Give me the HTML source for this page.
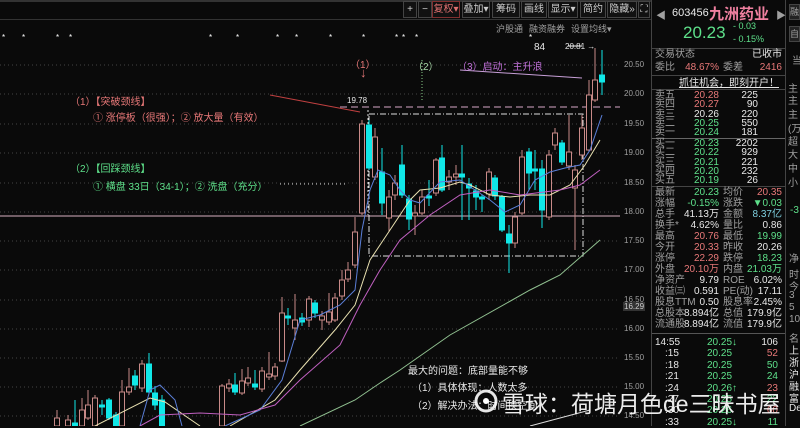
<!DOCTYPE html>
<html><head><meta charset="utf-8"><style>
*{margin:0;padding:0;box-sizing:border-box}
body{width:800px;height:426px;background:#0a0a0a;overflow:hidden;position:relative;font-family:"Liberation Sans","Noto Sans CJK SC",sans-serif;font-size:10px;color:#ddd}
.a{position:absolute;white-space:nowrap}
.btn{position:absolute;top:1px;height:17px;border:1px solid #444;background:#111;color:#ccc;font-size:10px;line-height:15px;text-align:center}
.r{color:#e87878}.g{color:#5ee08a}.w{color:#e8e8e8}.gy{color:#a0a0a0}.c{color:#7fd0e0}
.row{position:absolute;left:655px;width:130px;font-size:10px;line-height:10px;white-space:nowrap}
.row span{position:absolute}
</style></head><body>
<svg id="ch" class="a" style="left:0;top:0" width="651" height="426"></svg>

<div class="a" style="left:0;top:0;width:651px;height:2px;background:#333"></div>
<div class="a" style="left:0;top:19px;width:651px;height:1px;background:#333"></div>
<div class="btn" style="left:403px;width:14px">+</div>
<div class="btn" style="left:418px;width:14px">−</div>
<div class="btn" style="left:432px;width:28px;color:#e07070;border-color:#803030">复权▾</div>
<div class="btn" style="left:462px;width:28px">叠加▾</div>
<div class="btn" style="left:492px;width:28px">筹码</div>
<div class="btn" style="left:521px;width:26px">画线</div>
<div class="btn" style="left:548px;width:30px">显示▾</div>
<div class="btn" style="left:580px;width:26px">简约</div>
<div class="btn" style="left:607px;width:30px">隐藏»</div>
<div class="btn" style="left:638px;width:12px">⛶</div>
<div class="a gy" style="left:496px;top:22px;font-size:9px">沪股通</div>
<div class="a gy" style="left:529px;top:22px;font-size:9px">融资融券</div>
<div class="a gy" style="left:571px;top:22px;font-size:9px">设置均线▾</div>

<div class="a r" style="left:350px;top:56px;font-size:10px">（1）</div>
<div class="a r" style="left:360px;top:65px;font-size:13px">↓</div>
<div class="a" style="left:413px;top:58px;color:#a8d8a8">（2）</div>
<div class="a" style="left:457px;top:58px;color:#c070d8">（3）启动：主升浪</div>
<div class="a w" style="left:534px;top:42px;font-size:10px">84</div>
<div class="a w" style="left:565px;top:42px;font-size:8px">20.81 →</div>
<div class="a w" style="left:347px;top:96px;font-size:8px">19.78</div>
<div class="a r" style="left:70px;top:93px">（1）【突破颈线】</div>
<div class="a r" style="left:93px;top:109px">① 涨停板（很强）；② 放大量（有效）</div>
<div class="a g" style="left:70px;top:160px">（2）【回踩颈线】</div>
<div class="a g" style="left:93px;top:178px">① 横盘 33日（34-1）；② 洗盘（充分）</div>
<div class="a w" style="left:408px;top:362px">最大的问题：底部量能不够</div>
<div class="a w" style="left:412px;top:379px">（1）具体体现：人数太多</div>
<div class="a w" style="left:412px;top:397px">（2）解决办法：时间换空间</div>

<div class="a gy" style="left:624px;top:60px;font-size:8px">20.50</div>
<div class="a gy" style="left:624px;top:89px;font-size:8px">20.00</div>
<div class="a gy" style="left:624px;top:119px;font-size:8px">19.50</div>
<div class="a gy" style="left:624px;top:148px;font-size:8px">19.00</div>
<div class="a gy" style="left:624px;top:178px;font-size:8px">18.50</div>
<div class="a gy" style="left:624px;top:207px;font-size:8px">18.00</div>
<div class="a gy" style="left:624px;top:236px;font-size:8px">17.50</div>
<div class="a gy" style="left:624px;top:265px;font-size:8px">17.00</div>
<div class="a gy" style="left:624px;top:295px;font-size:8px">16.50</div>
<div class="a" style="left:623px;top:302px;font-size:8px;background:#333;color:#ccc;padding:0 1px">16.29</div>
<div class="a gy" style="left:624px;top:324px;font-size:8px">16.00</div>
<div class="a gy" style="left:624px;top:353px;font-size:8px">15.50</div>
<div class="a gy" style="left:624px;top:382px;font-size:8px">15.00</div>
<div class="a gy" style="left:624px;top:411px;font-size:8px">14.50</div>

<div class="a" style="left:651px;top:0;width:1px;height:426px;background:#444"></div>
<div class="a" style="left:785px;top:0;width:1px;height:426px;background:#444"></div>
<div class="a gy" style="left:656px;top:7px">◀</div>
<div class="a w" style="left:672px;top:7px;font-size:11px">603456</div>
<div class="a" style="left:709px;top:3px;font-size:15px;color:#f080a0;font-weight:bold">九洲药业</div>
<div class="a gy" style="left:776px;top:7px">▶</div>
<div class="a g" style="left:683px;top:23px;font-size:17px">20.23</div>
<div class="a g" style="left:733px;top:21px;font-size:9px">- 0.03</div>
<div class="a g" style="left:733px;top:34px;font-size:9px">- 0.15%</div>
<div class="a" style="left:652px;top:48px;width:133px;height:1px;background:#444"></div>
<div class="row" style="top:50px"><span class="gy" style="left:0">交易状态</span><span class="w" style="right:3px">已收市</span></div>
<div class="row" style="top:63px"><span class="gy" style="left:0">委比</span><span class="r" style="right:66px">48.67%</span><span class="gy" style="left:68px">委差</span><span class="r" style="right:3px">2416</span></div>
<div class="a" style="left:652px;top:75px;width:133px;height:1px;background:#444"></div>
<div class="row" style="top:79px"><span class="w" style="left:24px;text-decoration:underline">抓住机会，即刻开户！</span></div>
<div class="a" style="left:652px;top:89px;width:133px;height:1px;background:#444"></div>
<div id="ob"></div>

<div class="a gy" style="left:789px;top:4px;width:11px;height:16px;background:#222;border:1px solid #444;font-size:9px">融</div>
<div class="a gy" style="left:789px;top:26px;width:11px;height:16px;background:#222;border:1px solid #444;font-size:9px">自</div>
<div class="a gy" style="left:792px;top:52px">当</div>
<div class="a gy" style="left:788px;top:80px">主</div>
<div class="a gy" style="left:788px;top:92px">主</div>
<div class="a gy" style="left:788px;top:106px">主</div>
<div class="a gy" style="left:788px;top:120px">(万</div>
<div class="a gy" style="left:788px;top:133px">超</div>
<div class="a gy" style="left:788px;top:146px">大</div>
<div class="a gy" style="left:788px;top:160px">中</div>
<div class="a gy" style="left:788px;top:174px">小</div>
<div class="a g" style="left:790px;top:205px">-3</div>
<div class="a gy" style="left:789px;top:250px">净</div>
<div class="a gy" style="left:789px;top:266px">时</div>
<div class="a gy" style="left:789px;top:278px">今</div>
<div class="a gy" style="left:789px;top:290px">3</div>
<div class="a gy" style="left:789px;top:302px">5</div>
<div class="a gy" style="left:789px;top:314px">10</div>
<div class="a gy" style="left:789px;top:330px">名</div>
<div class="a w" style="left:789px;top:342px">上</div>
<div class="a w" style="left:789px;top:354px">浙</div>
<div class="a w" style="left:789px;top:366px">沪</div>
<div class="a w" style="left:789px;top:378px">融</div>
<div class="a w" style="left:789px;top:390px">富</div>
<div class="a w" style="left:789px;top:403px">De</div>

<svg class="a" style="left:473px;top:388px" width="26" height="26"><circle cx="13" cy="13" r="10" fill="none" stroke="#fff" stroke-width="3" opacity=".9"/><circle cx="13" cy="13" r="3" fill="#fff"/></svg>
<div class="a" style="left:502px;top:385px;font-size:23px;color:#fff;opacity:.92">雪球：荷塘月色de三昧书屋</div>

<script>
var s=document.getElementById('ch'),h='';
function L(x1,y1,x2,y2,c,e){h+='<line x1="'+x1+'" y1="'+y1+'" x2="'+x2+'" y2="'+y2+'" stroke="'+c+'" '+(e||'')+'/>';}
for(var y of [65,94,124,153,183,212,241,270,300,329,358,387,416])L(0,y,620,y,'#444','stroke-dasharray="1 3"');
L(0,216,620,216,'#d8b0c0');
L(340,107,620,107,'#d8a8c8','stroke-dasharray="7 4"');
h+='<rect x="369" y="114" width="214" height="142" fill="none" stroke="#ddd" stroke-dasharray="6 2 1 2"/>';
L(368,110,368,215,'#ddd','stroke-dasharray="2 2"');
L(422,60,422,100,'#8c8','stroke-dasharray="1 2"');
L(280,184,345,184,'#ccc','stroke-dasharray="1 3"');
L(270,95,360,112,'#c04040');
L(460,70,582,78,'#c8a0d8');L(568,46,582,46,'#fff');
for(var x of [2,22,56,69,209,236,276,295,329,362,395,402,415,529])h+='<text x="'+x+'" y="40" fill="#fff" font-size="8">*</text>';
var C=[
[57,426,418,410,426],[68,426,420,415,426],[75,423,426,400,426],[82,426,410,398,426],[88,418,405,390,420],[95,426,398,395,426],
[102,405,407,400,415],[109,400,418,398,420],[116,415,426,412,426],[122,426,392,380,426],[129,392,387,368,395],[135,376,385,370,390],
[142,388,364,360,392],[149,364,392,353,394],[155,393,405,386,410],[162,400,426,395,426],
[222,426,386,384,426],[229,388,384,379,392],[235,385,392,373,395],[242,393,381,369,395],[248,383,378,367,386],[255,384,387,370,390],
[262,389,371,367,392],[269,377,374,352,380],[275,376,367,363,380],[282,361,313,297,362],[288,316,318,308,325],[295,328,320,294,340],
[302,318,322,313,326],[309,320,299,296,327],[315,303,313,300,318],[322,320,316,311,330],[329,322,312,293,325],[335,320,298,293,322],
[342,296,280,270,300],[348,279,270,262,282],[355,265,232,217,268],[362,213,124,120,215],[369,125,168,120,170],[375,177,137,128,180],
[382,172,203,148,215],[389,218,197,190,232],[395,195,183,175,200],[402,165,195,145,198],[409,199,219,195,230],[415,216,213,205,235],
[422,213,197,190,215],[429,196,198,180,206],[436,193,160,158,196],[442,158,190,145,192],[449,182,177,170,190],[456,177,174,165,185],
[462,174,177,145,220],[469,184,188,178,220],[476,191,197,185,210],[482,197,199,195,212],[489,194,172,168,200],[495,178,196,175,200],
[502,197,230,195,232],[509,234,243,225,273],[515,243,217,212,248],[522,213,157,150,215],[529,152,173,148,190],[535,169,171,150,190],
[542,169,210,160,228],[549,217,155,150,220],[555,145,133,128,150],[562,143,162,140,165],[569,166,152,115,170],[575,188,170,165,250],
[582,155,128,115,160],[589,150,95,80,152],[595,100,80,48,102],[602,75,82,50,95]];
for(var k of C){var x=k[0],o=k[1],c=k[2],cy=c>o;var col=cy?'#10e8e8':'#c88a88';L(x,k[3],x,k[4],col);var t=Math.min(o,c),b=Math.max(o,c);
h+='<rect x="'+(x-2.5)+'" y="'+t+'" width="5" height="'+Math.max(b-t,1)+'" fill="'+(cy?'#10e8e8':'#0a0a0a')+'" stroke="'+col+'"/>';}
function P(p,c){h+='<polyline points="'+p+'" fill="none" stroke="'+c+'" stroke-width="1"/>';}
P('95,426 150,398 165,402 200,426','#e8e0b0');
P('230,426 275,400 300,370 335,330 355,305 370,260 390,230 410,200 420,190 440,188 460,182 470,185 490,195 510,197 530,195 550,195 570,185 585,165 600,140','#e8e0b0');
P('140,426 150,390 160,385 175,400 182,426','#5b7fd8');
P('225,426 260,410 282,380 300,320 320,315 340,305 355,290 362,230 370,190 378,170 390,175 400,190 410,200 420,203 440,182 460,180 475,190 490,200 505,212 520,205 535,180 550,172 565,168 580,165 590,150 602,115','#5b7fd8');
P('140,426 160,415 200,413 240,415 275,405 300,380 340,345 360,305 380,270 400,240 430,215 460,195 490,190 520,195 560,190 580,185 600,170','#c060c0');
P('300,426 355,400 380,383 400,370 450,335 530,290 560,275 600,240','#90c090');
P('530,426 590,410','#ddd');
s.innerHTML=h;
var ob=document.getElementById('ob'),o='';
function R(y,a,b,bc,c,d,dc,qr){o+='<div class="row" style="top:'+y+'px"><span class="gy" style="left:0">'+a+'</span><span class="'+bc+'" style="right:66px">'+b+'</span>'+(c?'<span class="gy" style="left:68px">'+c+'</span>':'')+'<span class="'+dc+'" style="right:'+(qr||3)+'px">'+d+'</span></div>';}
var ask=[['卖五','20.28','225','r'],['卖四','20.27','90','r'],['卖三','20.26','220','w'],['卖二','20.25','550','g'],['卖一','20.24','181','g']];
ask.forEach(function(a,i){R(91+i*9.3,a[0],a[1],a[3],'',a[2],'w',27);});
o+='<div class="a" style="left:652px;top:138px;width:133px;height:1px;background:#666"></div>';
var bid=[['买一','20.23','2202'],['买二','20.22','929'],['买三','20.21','221'],['买四','20.20','232'],['买五','20.19','26']];
bid.forEach(function(a,i){R(139+i*9.3,a[0],a[1],'g','',a[2],'w',27);});
o+='<div class="a" style="left:652px;top:186px;width:133px;height:1px;background:#444"></div>';
var st=[['最新','20.23','g','均价','20.35','r'],['涨幅','-0.15%','g','涨跌','▼0.03','g'],['总手','41.13万','w','金额','8.37亿','c'],['换手*','4.62%','w','量比','0.86','w'],
['最高','20.76','r','最低','19.99','g'],['今开','20.33','r','昨收','20.26','w'],['涨停','22.29','r','跌停','18.23','g'],['外盘','20.10万','r','内盘','21.03万','g'],
['净资产','9.79','w','ROE','6.02%','w'],['收益㈢','0.591','w','PE(动)','17.11','w'],['股息TTM','0.50','w','股息率','2.45%','w'],['总股本','8.894亿','w','总值','179.9亿','w'],['流通股','8.894亿','w','流值','179.9亿','w']];
st.forEach(function(a,i){R(188+i*11,a[0],a[1],a[2],a[3],a[4],a[5]);});
o+='<div class="a" style="left:652px;top:333px;width:133px;height:1px;background:#555"></div>';
var tk=[['14:55','20.25↓','106','w'],[':15','20.25','52','r'],[':18','20.25','50','g'],[':21','20.25','24','g'],[':24','20.26↑','23','r'],[':27','20.25','22','g'],[':30','20.26','60','r'],[':33','20.25↓','11','g']];
tk.forEach(function(a,i){o+='<div class="row" style="top:'+(338+i*11.4)+'px"><span class="w" style="left:'+(i?10:0)+'px">'+a[0]+'</span><span class="g" style="left:52px">'+a[1]+'</span><span class="'+a[3]+'" style="right:7px">'+a[2]+'</span></div>';});
ob.innerHTML=o;
</script>
</body></html>
